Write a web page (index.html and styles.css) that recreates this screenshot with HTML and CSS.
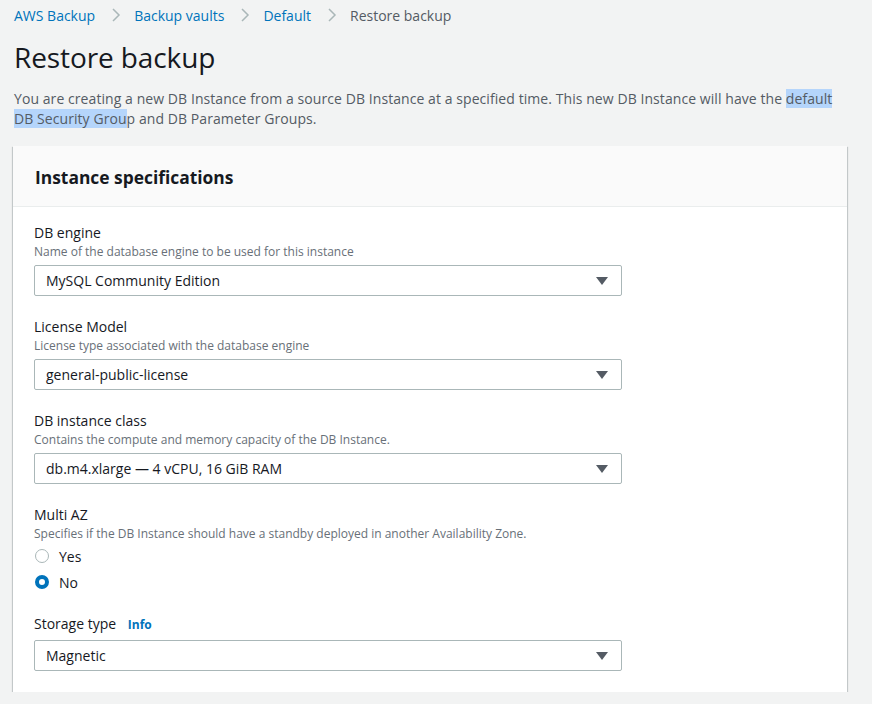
FILE: index.html
```html
<!DOCTYPE html>
<html lang="en">
<head>
<meta charset="utf-8">
<title>Restore backup</title>
<link rel="stylesheet" href="styles.css">
</head>
<body>
<div class="page">
  <nav class="crumbs">
    <a class="crumb-link" href="#">AWS Backup</a>
    <svg class="sep" width="10" height="14" viewBox="0 0 10 14"><path d="M2 1 L8 7 L2 13" fill="none" stroke="#aab7b8" stroke-width="1.5"/></svg>
    <a class="crumb-link" href="#">Backup vaults</a>
    <svg class="sep" width="10" height="14" viewBox="0 0 10 14"><path d="M2 1 L8 7 L2 13" fill="none" stroke="#aab7b8" stroke-width="1.5"/></svg>
    <a class="crumb-link" href="#">Default</a>
    <svg class="sep" width="10" height="14" viewBox="0 0 10 14"><path d="M2 1 L8 7 L2 13" fill="none" stroke="#aab7b8" stroke-width="1.5"/></svg>
    <span class="crumb-current">Restore backup</span>
  </nav>
  <h1 class="title">Restore backup</h1>
  <p class="intro">You are creating a new DB Instance from a source DB Instance at a specified time. This new DB Instance will have the <span class="sel">default DB Security Grou</span>p and DB Parameter Groups.</p>

  <section class="card">
    <header class="card-head"><h2 class="card-title">Instance specifications</h2></header>
    <div class="card-body">
      <div class="field">
        <div class="label">DB engine</div>
        <div class="hint">Name of the database engine to be used for this instance</div>
        <div class="select"><span>MySQL Community Edition</span><span class="caret"></span></div>
      </div>
      <div class="field">
        <div class="label">License Model</div>
        <div class="hint">License type associated with the database engine</div>
        <div class="select"><span>general-public-license</span><span class="caret"></span></div>
      </div>
      <div class="field">
        <div class="label">DB instance class</div>
        <div class="hint">Contains the compute and memory capacity of the DB Instance.</div>
        <div class="select"><span>db.m4.xlarge — 4 vCPU, 16 GiB RAM</span><span class="caret"></span></div>
      </div>
      <div class="field">
        <div class="label">Multi AZ</div>
        <div class="hint">Specifies if the DB Instance should have a standby deployed in another Availability Zone.</div>
        <div class="radios">
          <div class="radio"><span class="dot"></span><span>Yes</span></div>
          <div class="radio"><span class="dot on"></span><span>No</span></div>
        </div>
      </div>
      <div class="field storage">
        <div class="label">Storage type <a class="info" href="#">Info</a></div>
        <div class="select"><span>Magnetic</span><span class="caret"></span></div>
      </div>
    </div>
  </section>
</div>
</body>
</html>
```

FILE: styles.css
```css
* { box-sizing: border-box; }
html, body { margin: 0; padding: 0; }
body {
  background: #f2f3f3;
  font-family: "Open Sans", "Noto Sans", sans-serif;
  color: #16191f;
  font-size: 14px;
}
.page {
  padding: 4px 0 0 13px;
  width: 847px;
}
.crumbs {
  display: flex;
  align-items: center;
  height: 22px;
  padding-left: 1px;
  font-size: 14px;
}
.crumb-link { color: #0073bb; text-decoration: none; }
.crumb-current { color: #545b64; }
.sep { margin: 0 13px 0 16px; }
.title {
  margin: 0;
  padding: 13px 0 0 1px;
  font-size: 28px;
  font-weight: 400;
  line-height: 36px;
  letter-spacing: -0.1px;
}
.intro {
  margin: 14px 0 0 0;
  padding-left: 1px;
  max-width: 826px;
  color: #545b64;
  line-height: 20px;
  font-size: 14px;
  letter-spacing: 0.07px;
}
.sel { background: #b5d5fb; }
.card {
  margin-top: 17px;
  width: 834px;
  background: #fff;
  box-shadow: 0 1px 1px 0 rgba(0,28,36,.3), 1px 1px 1px 0 rgba(0,28,36,.15), -1px 1px 1px 0 rgba(0,28,36,.15);
}
.card-head {
  background: #fafafa;
  border-bottom: 1px solid #eaeded;
  height: 61px;
  display: flex;
  align-items: center;
  padding: 1px 22px 0;
}
.card-title {
  margin: 0;
  font-size: 17.4px;
  font-weight: 700;
  line-height: 22px;
}
.card-body {
  padding: 16px 21px 21px;
  display: flex;
  flex-direction: column;
  gap: 21px;
}
.field.storage { margin-top: 1px; }
.label { font-size: 14px; line-height: 20px; }
.hint { font-size: 12px; line-height: 17px; color: #687078; }
.select {
  margin-top: 5px;
  width: 588px;
  height: 31px;
  border: 1px solid #aab7b8;
  border-radius: 2px;
  display: flex;
  align-items: center;
  justify-content: space-between;
  padding: 0 13px 0 11px;
  font-size: 14px;
}
.caret {
  width: 0; height: 0;
  border-left: 6px solid transparent;
  border-right: 6px solid transparent;
  border-top: 8px solid #545b64;
}
.radios { margin-top: 4px; display: flex; flex-direction: column; gap: 6px; }
.radio { display: flex; align-items: center; gap: 10px; height: 20px; padding-left: 1px; }
.dot {
  width: 14px; height: 14px;
  border-radius: 50%;
  border: 1px solid #aab7b8;
  background: #fff;
}
.dot.on { border: 4px solid #0073bb; }
.info {
  color: #0073bb;
  font-weight: 700;
  font-size: 12px;
  text-decoration: none;
  margin-left: 8px;
}
```
